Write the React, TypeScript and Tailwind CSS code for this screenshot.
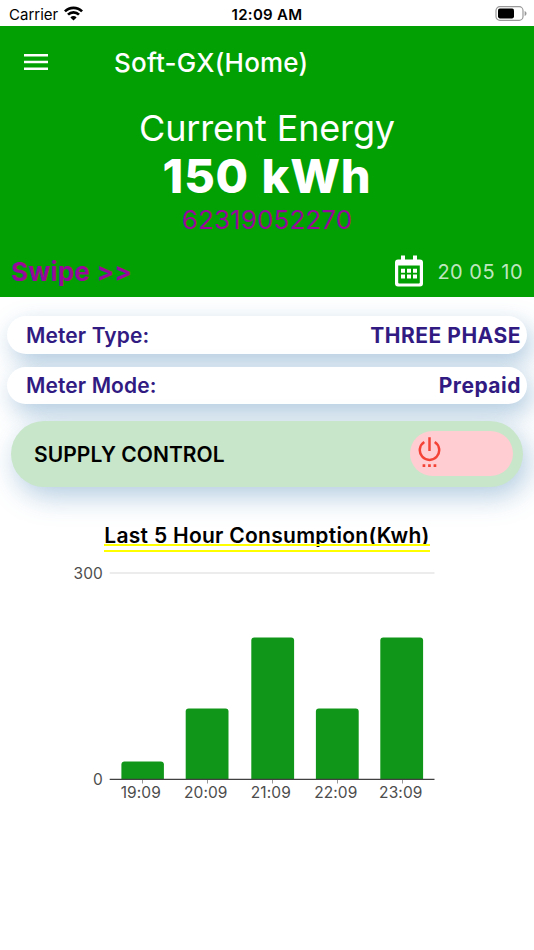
import React from "react";

const bars = [
  { label: "19:09", x: 121.4, h: 17.5, tick: 142.5, w: 42.5 },
  { label: "20:09", x: 185.7, h: 70.5, tick: 207.5, w: 42.8 },
  { label: "21:09", x: 251.3, h: 141.5, tick: 272.5, w: 42.8 },
  { label: "22:09", x: 315.9, h: 70.5, tick: 337.5, w: 42.8 },
  { label: "23:09", x: 380.3, h: 141.5, tick: 402.5, w: 42.8 },
];

function StatusBar() {
  return (
    <div className="grid h-[26px] grid-cols-3 items-center bg-white pl-[7px] pr-[7px] text-[15px] text-black">
      <div className="flex items-center gap-[6px] pl-[2px]">
        <span className="pt-[2px] leading-none">Carrier</span>
        <svg width="19" height="15" viewBox="0 0 19 15" fill="none" stroke="#000" strokeWidth="2.7">
          <path d="M0.9 5.4A12.2 12.2 0 0 1 18.1 5.4" />
          <path d="M4 8.6A7.8 7.8 0 0 1 15 8.6" />
          <path d="M9.5 14.6L6.4 11.4A4.3 4.3 0 0 1 12.6 11.4Z" fill="#000" stroke="none" />
        </svg>
      </div>
      <div className="pt-[2px] text-center font-semibold leading-none tracking-[0.3px]">12:09 AM</div>
      <div className="flex justify-end">
        <svg width="32" height="15" viewBox="0 0 32 15">
          <rect x="1" y="0.7" width="27" height="13.6" rx="3.8" fill="none" stroke="#999" strokeWidth="1.2" />
          <rect x="3" y="2.6" width="16" height="9.8" rx="1.8" fill="#000" />
          <path d="M29.6 5v5c1.3-.6 1.9-1.5 1.9-2.5S30.9 5.6 29.6 5Z" fill="#999" />
        </svg>
      </div>
    </div>
  );
}

function Header() {
  return (
    <header className="h-[271px] bg-[#02a002] text-white">
      <div className="flex h-[72px] items-center pl-6">
        <svg width="24" height="16" viewBox="0 0 24 16" fill="#fff">
          <path d="M0 0h24v2.600H0zM0 6.700h24v2.600H0zM0 13.400h24V16H0z" />
        </svg>
        <h1 className="ml-[66px] pt-[1px] text-[26px] font-medium leading-none tracking-[0.2px]">Soft-GX(Home)</h1>
      </div>
      <div className="flex flex-col items-center">
        <div className="mt-[8px] h-[44px] text-[36px] leading-[44px] tracking-[-0.15px]">Current Energy</div>
        <div className="h-[52px] text-[47px] font-extrabold leading-[51px] tracking-[0.8px] [word-spacing:1.5px]">150 kWh</div>
        <div className="h-[34px] text-[26px] leading-[35px] tracking-[0.1px] text-[#98089a]">62319052270</div>
      </div>
      <div className="mt-[17px] flex h-[36px] items-center pl-[11px] pr-[11px]">
        <span className="pt-[1px] text-[26px] font-bold leading-none tracking-[0.2px] text-[#98089a]">Swipe &gt;&gt;</span>
        <svg className="ml-auto" width="28" height="32" viewBox="0 0 28 32">
          <path fill="#fff" fillRule="evenodd" d="M6 0.500h4v4h8V0.500h4v4h3a3 3 0 0 1 3 3v21a3 3 0 0 1-3 3H3a3 3 0 0 1-3-3V7.500a3 3 0 0 1 3-3h3zM3.200 10.500v17q0 1 1 1h19.600q1 0 1-1V10.500z" />
          <path fill="#fff" d="M6 13.700h4v4H6zM12 13.700h4v4h-4zM18 13.700h4v4h-4zM6 19.500h4v4H6zM12 19.500h4v4h-4zM18 19.500h4v4h-4z" />
        </svg>
        <span className="ml-[14px] pt-[1px] text-[20px] leading-none tracking-[0.5px] text-white/75">20 05 10</span>
      </div>
    </header>
  );
}

function InfoRow({ label, value }: { label: string; value: string }) {
  return (
    <div className="flex h-[37.5px] items-center justify-between rounded-full bg-white pl-[19px] pr-[6px] pt-[1px] text-[21px] leading-none text-[#311b82] shadow-[5px_9px_24px_rgba(70,130,180,0.42)]">
      <span className="font-semibold tracking-[0.1px]">{label}</span>
      <span className="font-bold tracking-[0.5px]">{value}</span>
    </div>
  );
}

function SupplyControl() {
  return (
    <div className="relative mx-[11px] mt-[17px] flex h-[65.5px] items-center justify-between rounded-full bg-[#c8e6c9] pl-[23px] pr-[10px] shadow-[5px_9px_28px_rgba(70,130,180,0.42)]">
      <span className="pt-[1px] text-[21px] font-semibold leading-none tracking-[0.05px] text-black">SUPPLY CONTROL</span>
      <div className="flex h-[45px] w-[103px] items-start rounded-full bg-[#ffcdd2] pl-[8px] pt-[6px]">
        <svg width="23" height="31" viewBox="0 0 23 31" fill="none">
          <path d="M11.5 0.300v13.800M6.300 5A9.700 9.700 0 1 0 16.700 5" stroke="#f44336" strokeWidth="2.500" />
          <path fill="#f44336" d="M4.600 27.300h2.700v2.700H4.600zM10.100 27.300h2.700v2.700h-2.700zM15.600 27.300h2.700v2.700h-2.700z" />
        </svg>
      </div>
    </div>
  );
}

function Chart() {
  return (
    <svg className="block" width="534" height="260" viewBox="0 556 534 260">
      <path d="M109.700 573H434.500" stroke="#e6e6e6" strokeWidth="1.700" />
      {bars.map((b) => (
        <g key={b.label}>
          <path
            fill="#109618"
            d={`M${b.x} 779.500V${782 - b.h}q0 -3 3 -3h${b.w - 6}q3 0 3 3V779.500Z`}
          />
          <path d={`M${b.tick} 780v3.500`} stroke="#999" />
          <text x={b.tick - 1.7} y="798" textAnchor="middle" className="fill-[#4d4d4d] text-[15.5px] tracking-[0.1px]">
            {b.label}
          </text>
        </g>
      ))}
      <path d="M109.700 779.300H434.500" stroke="#404040" strokeWidth="1.200" />
      <text x="103" y="579" textAnchor="end" className="fill-[#4d4d4d] text-[15.5px] tracking-[0.1px]">300</text>
      <text x="103" y="785" textAnchor="end" className="fill-[#4d4d4d] text-[15.5px] tracking-[0.1px]">0</text>
    </svg>
  );
}

export default function App() {
  return (
    <div className="h-[950px] w-[534px] overflow-hidden bg-white font-['Inter',sans-serif]">
      <StatusBar />
      <div className="relative z-30">
        <Header />
      </div>
      <main>
        <div className="mx-[7px] mt-[19px] flex flex-col gap-[13px]">
          <InfoRow label="Meter Type:" value="THREE PHASE" />
          <InfoRow label="Meter Mode:" value="Prepaid" />
        </div>
        <SupplyControl />
        <div className="relative mt-[35.5px] flex h-[34px] justify-center">
          <div className="relative h-[29px] text-[21px] font-semibold leading-[27px] tracking-[0.28px] text-black">
            Last 5 Hour Consumption(Kwh)
            <div className="absolute left-0 top-[22px] h-[8px] w-full border-y-2 border-[#ffff00]" />
          </div>
        </div>
        <Chart />
      </main>
    </div>
  );
}
